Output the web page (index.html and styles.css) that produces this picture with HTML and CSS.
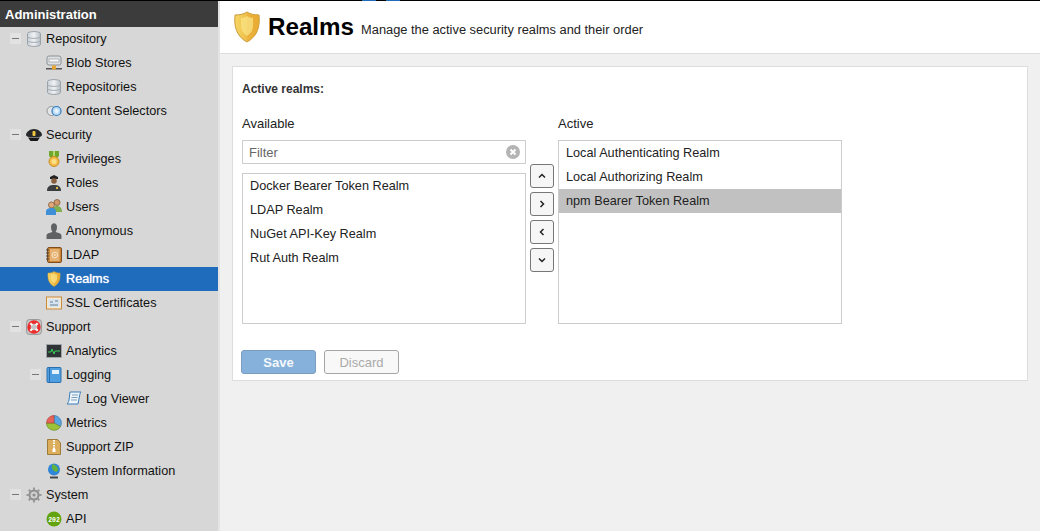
FILE: index.html
```html
<!DOCTYPE html>
<html lang="en">
<head>
<meta charset="UTF-8" />
<title>Realms</title>
<link rel="stylesheet" href="styles.css">
</head>
<body>
<svg class="defs" width="0" height="0">
<defs>
<linearGradient id="gold" x1="0" y1="0" x2="1" y2="0"><stop offset="0" stop-color="#f6d765"/><stop offset="1" stop-color="#e6a52c"/></linearGradient>
<linearGradient id="steel" x1="0" y1="0" x2="1" y2="0"><stop offset="0" stop-color="#c9d0d6"/><stop offset=".5" stop-color="#f0f2f4"/><stop offset="1" stop-color="#b4bcc4"/></linearGradient>
<symbol id="i-db" viewBox="0 0 16 16"><path d="M1.500 2.500c0-2.500 13-2.500 13 0v11c0 2.500-13 2.500-13 0z" fill="url(#steel)" stroke="#9aa2a9"/><path d="M1.500 6c2 1.800 11 1.800 13 0M1.500 10c2 1.800 11 1.800 13 0" fill="none" stroke="#a3abb2"/></symbol>
<symbol id="i-shield" viewBox="0 0 28 32"><path d="M14 1c3 2 7 3 12 3 1 11-1 21-12 27C3 25 1 15 2 4c5 0 9-1 12-3z" fill="url(#gold)" stroke="#c99a3c"/><path d="M14 1v30C25 25 27 15 26 4c-5 0-9-1-12-3z" fill="#e9ad36" opacity=".55"/><path d="M8 7c2.500 0 4.500-1 6-2 1.500 1 3.500 2 6 2v8c0 4-2 7-6 10-4-3-6-6-6-10z" fill="#fbe689" opacity=".7"/></symbol>
</defs>
</svg>
<div class="topline"><span class="tick"></span><span class="tick"></span></div>
<div class="app">
<nav class="sidebar">
<div class="sidebar-title">Administration</div>

<div class="row lvl1"><span class="toggle"></span><svg class="icon"><use href="#i-db"/></svg>Repository</div>
<div class="row lvl2"><svg class="icon" viewBox="0 0 16 16"><rect x="1" y="1" width="14" height="9" rx="2" fill="#dfe2e4" stroke="#8a9096"/><rect x="3" y="4" width="10" height="3" fill="#f7f7f7" stroke="#8a8f94" stroke-width=".6"/><rect x="0" y="13" width="16" height="1.500" fill="#555"/><rect x="6" y="10.500" width="4" height="4" fill="#e5a530"/></svg>Blob Stores</div>
<div class="row lvl2"><svg class="icon"><use href="#i-db"/></svg>Repositories</div>
<div class="row lvl2"><svg class="icon" viewBox="0 0 16 16"><circle cx="5.500" cy="8" r="4.500" fill="#e4e6e8" stroke="#8e959b"/><circle cx="10.500" cy="8" r="4.500" fill="#bcdcf5" stroke="#2f7bc0" stroke-width="1.200"/><circle cx="10.500" cy="8" r="2" fill="#eaf4fc"/></svg>Content Selectors</div>

<div class="row lvl1"><span class="toggle"></span><svg class="icon" viewBox="0 0 16 16"><path d="M0 8c0-3 4-6 8-6s8 3 8 6c0 1-2 2-3 2H3C2 10 0 9 0 8z" fill="#26282b"/><path d="M2 10.500h12L11.500 14h-7z" fill="#17181a"/><rect x="6.500" y="4" width="3" height="5" rx="1" fill="#efc83f"/></svg>Security</div>
<div class="row lvl2"><svg class="icon" viewBox="0 0 16 16"><path d="M3 0h10v5l-2 2H5L3 5z" fill="#6fa62c"/><rect x="7" y="0" width="2" height="6" fill="#b7d66c"/><circle cx="8" cy="10.500" r="5" fill="#f4bd4a" stroke="#c98a1e"/><circle cx="8" cy="10.500" r="2.500" fill="#fbe08a"/></svg>Privileges</div>
<div class="row lvl2"><svg class="icon" viewBox="0 0 16 16"><path d="M4 2l4-2 4 2v2H4z" fill="#222"/><circle cx="8" cy="6" r="2.800" fill="#8a5f40"/><path d="M1 16c0-5 3-6 7-6s7 1 7 6z" fill="#3b3d40"/><rect x="10" y="12" width="2" height="2" fill="#e5bd3c"/></svg>Roles</div>
<div class="row lvl2"><svg class="icon" viewBox="0 0 16 16"><circle cx="11" cy="3.500" r="3" fill="#cf9a6b" stroke="#7a4e2c" stroke-width=".7"/><path d="M6 13c0-4 2-6 5-6s5 2 5 6z" fill="#7fb04c"/><circle cx="5.500" cy="6" r="3" fill="#e0aa7d" stroke="#7a4e2c" stroke-width=".7"/><path d="M0 16v-3c0-3 2-4 5.500-4s4.500 1 4.500 4v3z" fill="#3f8fd8"/></svg>Users</div>
<div class="row lvl2"><svg class="icon" viewBox="0 0 16 16"><path d="M5 4c0-5 6-5 6 0 0 3-1 4-1.500 5 3 1 6 1 6 4v3H.500v-3c0-3 3-3 6-4C6 8 5 7 5 4z" fill="#5f6163"/></svg>Anonymous</div>
<div class="row lvl2"><svg class="icon" viewBox="0 0 16 16"><rect x="1.500" y=".500" width="14" height="15" rx="1.500" fill="#c98538" stroke="#7f4e1c"/><rect x="4" y="2" width="9.500" height="12" fill="#e6b273"/><circle cx="8.800" cy="8" r="2.800" fill="none" stroke="#fae6c6"/><circle cx="8.800" cy="8" r="1" fill="#fae6c6"/><path d="M0 3h3M0 6h3M0 9h3M0 12h3" stroke="#444"/></svg>LDAP</div>
<div class="row lvl2 selected"><svg class="icon" viewBox="0 0 28 32"><use href="#i-shield"/></svg>Realms</div>
<div class="row lvl2"><svg class="icon" viewBox="0 0 16 16"><rect x=".500" y="2" width="15" height="12" fill="#f6e9d2" stroke="#c88a3c"/><rect x="2.500" y="4" width="11" height="8" fill="#d5e4f0"/><path d="M4 7h3M9 6h3M4 10h8" stroke="#6b7f90"/></svg>SSL Certificates</div>

<div class="row lvl1"><span class="toggle"></span><svg class="icon" viewBox="0 0 16 16"><rect x=".500" y=".500" width="15" height="15" rx="3" fill="#c4c4c4" stroke="#9a9a9a"/><circle cx="8" cy="8" r="5" fill="none" stroke="#ee2b2b" stroke-width="3.400"/><path d="M4.300 4.300l2 2M11.700 4.300l-2 2M4.300 11.700l2-2M11.700 11.700l-2-2" stroke="#f6f6f6" stroke-width="2.200"/></svg>Support</div>
<div class="row lvl2"><svg class="icon" viewBox="0 0 16 16"><rect x=".500" y="1.500" width="15" height="13" fill="#2f3335" stroke="#a0a4a7"/><path d="M2 9h3l1-3 2 5 1-3h5" fill="none" stroke="#35d05a"/></svg>Analytics</div>
<div class="row lvl2 has-toggle"><span class="toggle"></span><svg class="icon" viewBox="0 0 16 16"><rect x="1" y=".500" width="14" height="15" rx="1" fill="#4f9fe0" stroke="#2a70b0"/><rect x="3" y="1" width="1" height="14" fill="#2a70b0"/><rect x="6" y="3" width="7" height="4" fill="#e6f2fb"/></svg>Logging</div>
<div class="row lvl3"><svg class="icon" viewBox="0 0 16 16"><path d="M4 1h11c-1 1-1 2-1.500 4L12 13H1c1-1 1.500-2 2-4z" fill="#eef6fc" stroke="#3c7fb8"/><path d="M6 4h6M5.500 6.500h6M5 9h6" stroke="#7d9db8"/></svg>Log Viewer</div>
<div class="row lvl2"><svg class="icon" viewBox="0 0 16 16"><path d="M8 8V.500a7.500 7.500 0 0 1 6.500 11z" fill="#57a5e3" stroke="#2d6ea8" stroke-width=".6"/><path d="M8 8l6.500 3.500A7.500 7.500 0 0 1 .500 8z" fill="#9cc23a" stroke="#62851c" stroke-width=".6"/><path d="M8 8H.500A7.500 7.500 0 0 1 8 .500z" fill="#e8645a" stroke="#a83a32" stroke-width=".6"/></svg>Metrics</div>
<div class="row lvl2"><svg class="icon" viewBox="0 0 16 16"><path d="M1.500 .500h10l3 3.500v11.500h-13z" fill="#dcae5c" stroke="#9c7a38"/><path d="M8 1v9" stroke="#fff" stroke-width="2" stroke-dasharray="1.500 1"/><rect x="6.500" y="10" width="3" height="3" fill="#fff"/></svg>Support ZIP</div>
<div class="row lvl2"><svg class="icon" viewBox="0 0 16 16"><circle cx="8" cy="6.500" r="6" fill="#2f86d6"/><path d="M6 1.500c3 0 6 2 6 5 0 2-2 3-3 2S6 7 6 5z" fill="#62b33c"/><path d="M4 14.500h8" stroke="#44484c" stroke-width="2"/></svg>System Information</div>

<div class="row lvl1"><span class="toggle"></span><svg class="icon" viewBox="0 0 16 16"><circle cx="8" cy="8" r="4.500" fill="#d0d0d0" stroke="#8c8c8c" stroke-width="2"/><circle cx="8" cy="8" r="1.500" fill="#8c8c8c"/><path d="M8 .500v3M8 12.500v3M.500 8h3M12.500 8h3M2.700 2.700l2 2M11.300 11.300l2 2M13.300 2.700l-2 2M4.700 11.300l-2 2" stroke="#999" stroke-width="2"/></svg>System</div>
<div class="row lvl2"><svg class="icon" viewBox="0 0 16 16"><circle cx="8" cy="8" r="7.500" fill="#62a30e"/><text x="8" y="10.500" class="badge-text">202</text></svg>API</div>
</nav>

<main class="content">
<header class="page-head">
<svg class="head-icon" viewBox="0 0 28 32"><use href="#i-shield"/></svg>
<h1>Realms</h1>
<span class="subtitle">Manage the active security realms and their order</span>
</header>

<section class="panel">
<h2>Active realms:</h2>
<div class="picker">
<div class="col">
<div class="col-label">Available</div>
<div class="filter"><span class="filter-text">Filter</span>
<svg class="clear" viewBox="0 0 14 14"><circle cx="7" cy="7" r="7" fill="#b4b4b4"/><path d="M4.500 4.500l5 5M9.500 4.500l-5 5" stroke="#fff" stroke-width="2"/></svg>
</div>
<ul class="list short">
<li>Docker Bearer Token Realm</li>
<li>LDAP Realm</li>
<li>NuGet API-Key Realm</li>
<li>Rut Auth Realm</li>
</ul>
</div>
<div class="movers">
<button class="mover"><svg viewBox="0 0 10 10"><path d="M2 6.500L5 3.500l3 3"/></svg></button>
<button class="mover"><svg viewBox="0 0 10 10"><path d="M3.500 2l3 3-3 3"/></svg></button>
<button class="mover"><svg viewBox="0 0 10 10"><path d="M6.500 2l-3 3 3 3"/></svg></button>
<button class="mover"><svg viewBox="0 0 10 10"><path d="M2 3.500l3 3 3-3"/></svg></button>
</div>
<div class="col">
<div class="col-label">Active</div>
<ul class="list tall">
<li>Local Authenticating Realm</li>
<li>Local Authorizing Realm</li>
<li class="picked">npm Bearer Token Realm</li>
</ul>
</div>
</div>
<div class="actions">
<button class="btn save">Save</button>
<button class="btn discard">Discard</button>
</div>
</section>
</main>
</div>
</body>
</html>
```

FILE: styles.css
```css
* {
	margin: 0;
	padding: 0;
	box-sizing: border-box;
}

html, body {
	height: 100%;
	overflow: hidden;
}

body {
	display: flex;
	flex-direction: column;
	font: 12.7px "Liberation Sans", Arial, sans-serif;
	color: #111;
	background-color: #f0f0f0;
}

.defs {
	display: block;
	height: 0;
}

.topline {
	display: flex;
	flex: none;
	gap: 10px;
	height: 1px;
	padding-left: 362px;
	background-color: #000;
}

.tick {
	width: 14px;
	background-color: #1f6cbd;
}

.app {
	display: flex;
	flex: 1;
	min-height: 0;
}

/* left tree */
.sidebar {
	flex: none;
	width: 220px;
	overflow: hidden;
	background-color: #d7d7d7;
	border-right: 2px solid #e4e4e4;
}

.sidebar-title {
	height: 26px;
	padding: 6px 5px 0;
	font-size: 13px;
	font-weight: bold;
	color: #fff;
	background-color: #3c3c3c;
}

.row {
	display: flex;
	align-items: center;
	height: 24px;
	padding-bottom: 1px;
	white-space: nowrap;
}

.lvl1 {
	padding-left: 10px;
}

.lvl2 {
	padding-left: 46px;
}

.lvl2.has-toggle {
	padding-left: 30px;
}

.lvl3 {
	padding-left: 66px;
}

.selected {
	color: #fff;
	text-shadow: 0 0 1px #fff;
	background-color: #1f6cbd;
}

.toggle {
	position: relative;
	flex: none;
	width: 11px;
	height: 11px;
	margin-right: 5px;
	background-color: #e2e2e2;
}

.toggle::after {
	content: "";
	position: absolute;
	left: 2px;
	top: 5px;
	width: 7px;
	height: 1px;
	background-color: #777;
}

.icon {
	flex: none;
	width: 16px;
	height: 16px;
	margin-right: 4px;
}

.badge-text {
	font: bold 6.500px "Liberation Mono", monospace;
	fill: #fff;
	text-anchor: middle;
}

/* main */
.content {
	flex: 1;
	min-width: 0;
}

.page-head {
	display: flex;
	align-items: center;
	height: 53px;
	padding-left: 13px;
	background-color: #fff;
	border-bottom: 1px solid #ddd;
}

.head-icon {
	flex: none;
	width: 28px;
	height: 32px;
	margin-right: 7px;
}

h1 {
	font-size: 24.200px;
	font-weight: bold;
	color: #000;
}

.subtitle {
	margin: 5px 0 0 7px;
	font-size: 12.850px;
	color: #222;
}

.panel {
	height: 315px;
	margin: 12px 12px 0;
	padding: 15px 9px 0;
	background-color: #fff;
	border: 1px solid #ddd;
}

h2 {
	height: 16px;
	font-size: 12px;
	font-weight: bold;
	color: #333;
}

.picker {
	display: flex;
	margin-top: 18px;
}

.col {
	width: 284px;
}

.col-label {
	height: 24px;
	font-size: 13px;
	color: #222;
}

.filter {
	display: flex;
	align-items: center;
	justify-content: space-between;
	height: 24px;
	margin-bottom: 9px;
	padding: 0 5px 0 6px;
	border: 1px solid #ccc;
}

.filter-text {
	color: #666;
	font-size: 13px;
}

.clear {
	width: 14px;
	height: 14px;
}

.list {
	list-style: none;
	border: 1px solid #ccc;
}

.list.short {
	height: 151px;
}

.list.tall {
	height: 184px;
}

.list li {
	height: 24px;
	padding: 5px 7px 0;
	color: #222;
}

.list li.picked {
	background-color: #c1c1c1;
}

.movers {
	display: flex;
	flex-direction: column;
	gap: 4px;
	width: 32px;
	padding: 48px 0 0 4px;
}

.mover {
	display: flex;
	align-items: center;
	justify-content: center;
	width: 24px;
	height: 24px;
	background-color: #f6f6f6;
	border: 1px solid #777;
	border-radius: 3px;
}

.mover svg {
	width: 10px;
	height: 10px;
	fill: none;
	stroke: #222;
	stroke-width: 1.500;
}

.actions {
	display: flex;
	gap: 8px;
	margin: 26px 0 0 -1px;
}

.btn {
	width: 75px;
	height: 24px;
	font: 13px "Liberation Sans", Arial, sans-serif;
	border-radius: 3px;
}

.save {
	font-weight: bold;
	color: #f4f8fc;
	background-color: #86b1da;
	border: 1px solid #7a9dc0;
}

.discard {
	color: #aaa;
	background-color: #f8f8f8;
	border: 1px solid #a5a5a5;
}
```
